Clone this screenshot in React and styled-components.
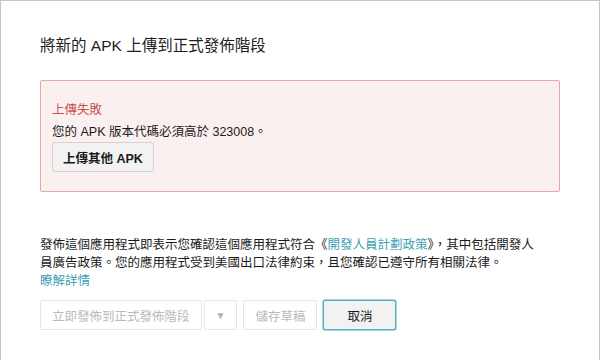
import React from 'react';
import styled, { createGlobalStyle } from 'styled-components';

const GlobalStyle = createGlobalStyle`
  html, body {
    margin: 0;
    padding: 0;
    background: #fff;
  }
  body {
    font-family: "Liberation Sans", "Noto Sans CJK TC", sans-serif;
    color: #222;
  }
`;

const Frame = styled.div`
  box-sizing: border-box;
  width: 600px;
  min-height: 360px;
  border: 1px solid #c6c6c6;
  border-bottom: none;
  padding: 35px 39px 0;
`;

const Title = styled.h2`
  margin: 0;
  font-size: 15.5px;
  line-height: 20px;
  font-weight: normal;
  color: #1f1f1f;
`;

const ErrorBox = styled.div`
  margin-top: 24px;
  border: 1px solid #e7a9a6;
  border-radius: 2px;
  background: #fbf0f0;
  padding: 19px 11px 19px;
  font-size: 12.5px;
  line-height: 20px;
`;

const ErrorTitle = styled.div`
  color: #c8504b;
  margin-bottom: 2px;
`;

const ErrorText = styled.div`
  color: #1a1a1a;
`;

const Button = styled.button`
  box-sizing: border-box;
  height: 30px;
  padding: 0 ${p => p.$pad || 10}px;
  font-family: inherit;
  font-size: 12.5px;
  font-weight: ${p => (p.$bold ? 'bold' : 'normal')};
  color: ${p => (p.$disabled ? '#bababa' : '#1a1a1a')};
  background: ${p => (p.$disabled ? '#fff' : '#f2f2f2')};
  border: 1px solid ${p => (p.$focus ? '#4fb1c2' : p.$disabled ? '#e6e6e6' : '#d4d4d4')};
  border-radius: 2px;
  box-shadow: ${p => (p.$focus ? '0 0 0 0.5px #4fb1c2' : 'none')};
  cursor: default;
`;

const Notice = styled.p`
  margin: 44px 0 0;
  font-size: 12.5px;
  line-height: 18px;
  color: #1a1a1a;
`;

const Link = styled.a`
  color: #3f9fb3;
  text-decoration: none;
`;

const Actions = styled.div`
  display: flex;
  align-items: center;
  margin-top: 10px;
  gap: 2px;
`;

const Spacer = styled.span`
  width: ${p => p.$w}px;
`;

const Caret = styled.span`
  font-size: 10px;
  color: #b0b0b0;
`;

export default function App() {
  return (
    <Frame>
      <GlobalStyle />
      <Title>將新的 APK 上傳到正式發佈階段</Title>
      <ErrorBox>
        <ErrorTitle>上傳失敗</ErrorTitle>
        <ErrorText>您的 APK 版本代碼必須高於 323008。</ErrorText>
        <Button $bold $pad={10}>上傳其他 APK</Button>
      </ErrorBox>
      <Notice>
        發佈這個應用程式即表示您確認這個應用程式符合《<Link href="#">開發人員計劃政策</Link>》，其中包括開發人
        <br />
        員廣告政策。您的應用程式受到美國出口法律約束，且您確認已遵守所有相關法律。
        <br />
        <Link href="#">瞭解詳情</Link>
      </Notice>
      <Actions>
        <Button $disabled $pad={11}>立即發佈到正式發佈階段</Button>
        <Button $disabled $pad={11}><Caret>▼</Caret></Button>
        <Spacer $w={2} />
        <Button $disabled $pad={11}>儲存草稿</Button>
        <Spacer $w={2} />
        <Button $focus $pad={23}>取消</Button>
      </Actions>
    </Frame>
  );
}
